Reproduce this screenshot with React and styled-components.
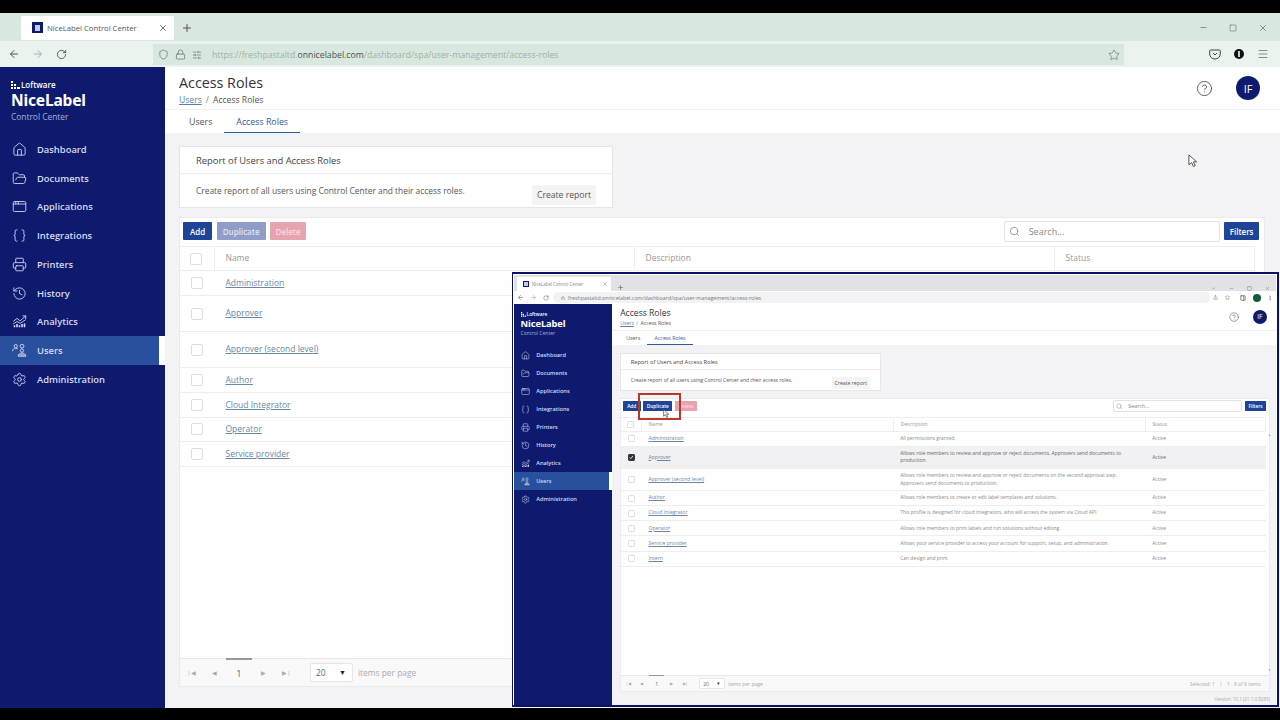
import styled, { createGlobalStyle } from "styled-components";
import {
  AppWindow, ArrowLeft, ArrowRight, Braces, ChevronDown, CircleHelp, FolderOpen,
  History, Home, Lock, Menu, Minus, MoreVertical, PanelRight, Plus, Printer, RotateCw, Search,
  Settings, Share, Shield, SlidersHorizontal, Square, Star, X,
} from "lucide-react";

const NAVY = "#0e1a6d";
const BLUE = "#1f4396";
const FONT = `"Open Sans", "Noto Sans", sans-serif`;

const GlobalStyle = createGlobalStyle`
  html, body { margin: 0; padding: 0; background: #000; }
  body { font-family: ${FONT}; }
  * { box-sizing: border-box; }
`;

const Frame = styled.div`
  position: relative;
  width: 1280px;
  height: 720px;
  padding: 13px 0 12px;
  overflow: hidden;
  background: #000;
`;

const Browser = styled.div`
  display: flex;
  flex-direction: column;
  height: 100%;
  background: #fff;
`;

/* firefox chrome of the recording */
const TabStrip = styled.div`
  display: flex;
  align-items: center;
  height: 28px;
  padding: 1px 0 0 21px;
  flex-shrink: 0;
  background: #d9e8df;
  color: #555;
`;

const Tab = styled.div`
  display: flex;
  align-items: center;
  width: 153px;
  height: 24px;
  padding: 0 6px 0 11px;
  background: #fff;
  border-radius: 2px;
  font-size: 7.7px;
  color: #555;
  span { flex-grow: 1; margin-left: 4px; white-space: nowrap; }
`;

const Favicon = styled.div`
  width: ${(p) => p.$size}px;
  height: ${(p) => p.$size}px;
  flex-shrink: 0;
  background: ${NAVY};
  border: ${(p) => p.$size / 3.6}px solid ${NAVY};
  border-bottom-width: ${(p) => p.$size / 5}px;
  &::after {
    content: "";
    display: block;
    height: 100%;
    background: #c5cbe6;
  }
`;

const NewTab = styled.div`
  display: flex;
  margin-left: ${(p) => p.$gap}px;
`;

const WindowButtons = styled.div`
  display: flex;
  align-items: center;
  gap: ${(p) => p.$gap}px;
  margin-left: auto;
  margin-right: ${(p) => p.$right}px;
  color: #777;
`;

const ToolBar = styled.div`
  display: flex;
  align-items: center;
  height: 26px;
  padding: 0 11px 0 8px;
  flex-shrink: 0;
  background: #ebf3ef;
  color: #555;
`;

const NavButtons = styled.div`
  display: flex;
  align-items: center;
  gap: 12px;
  width: 145px;
  flex-shrink: 0;
`;

const UrlBar = styled.div`
  display: flex;
  align-items: center;
  width: 971px;
  height: 21px;
  padding: 1px 4px 0 5px;
  background: #d9e8df;
  font-size: 8.7px;
  color: #9db0a9;
  white-space: nowrap;
  svg { flex-shrink: 0; margin-right: 6px; color: #566; }
  svg:last-child { margin-right: 0; }
  b { font-weight: 400; color: #48514e; }
  span { margin-left: 4px; flex-grow: 1; }
`;

const BarIcons = styled.div`
  display: flex;
  align-items: center;
  gap: 13px;
  margin-left: auto;
`;

const Pocket = styled.svg`
  width: 12px;
  height: 12px;
`;

const ProfileDot = styled.div`
  display: flex;
  align-items: center;
  justify-content: center;
  width: 10px;
  height: 10px;
  border-radius: 50%;
  background: #111;
  &::after { content: ""; width: 1.5px; height: 6px; background: #ccc; }
`;

/* the app itself, drawn twice: full size and inside the zoomed window */
const AppBody = styled.div`
  display: flex;
  flex-grow: 1;
  min-height: 0;
  min-width: 0;
`;

const Sidebar = styled.nav`
  display: flex;
  flex-direction: column;
  width: ${(p) => (p.$compact ? 163 : 165)}px;
  flex-shrink: 0;
  background: ${NAVY};
  color: #d5daf2;
`;

const Brand = styled.div`
  height: ${(p) => (p.$compact ? 70 : 68)}px;
  padding: 13px 0 0 11px;
  flex-shrink: 0;
`;

const Loftware = styled.div`
  display: flex;
  align-items: center;
  gap: 1px;
  height: 9px;
  font-size: 8px;
  font-weight: 600;
  line-height: 9px;
  color: #fff;
`;

const BrandMark = styled.svg`
  width: 9px;
  height: 8px;
`;

const NiceLabel = styled.div`
  height: 22px;
  font-family: "Noto Sans", sans-serif;
  font-size: 15.6px;
  font-weight: 700;
  line-height: 22px;
  letter-spacing: -0.2px;
  color: #fff;
`;

const ControlCenter = styled.div`
  font-size: 8.4px;
  color: #a4b2dd;
`;

const NavItem = styled.div`
  display: flex;
  align-items: center;
  gap: 10px;
  height: ${(p) => (p.$compact ? 30 : 28.75)}px;
  padding-left: 12px;
  flex-shrink: 0;
  font-size: 9.4px;
  font-weight: 600;
  background: ${(p) => (p.$active ? "#28509f" : "transparent")};
  border-right: ${(p) => (p.$active ? "6px solid #fff" : "none")};
  svg { width: 15px; height: 15px; flex-shrink: 0; }
`;

const Content = styled.main`
  display: flex;
  flex-direction: column;
  flex-grow: 1;
  min-width: 0;
  background: #f3f3f6;
`;

const PageHeader = styled.header`
  flex-shrink: 0;
  background: #fff;
`;

const TitleRow = styled.div`
  display: flex;
  align-items: center;
  justify-content: space-between;
  height: ${(p) => (p.$compact ? 45 : 43)}px;
  padding: 0 ${(p) => (p.$compact ? 15 : 20)}px 0 14px;
  border-bottom: 1px solid #f0f0f0;
`;

const TitleBlock = styled.div`
  padding-top: 4px;
`;

const PageTitle = styled.h1`
  margin: 0;
  font-size: 14.3px;
  font-weight: 400;
  line-height: 18px;
  color: #333;
`;

const Breadcrumb = styled.div`
  margin-top: 2px;
  font-size: 8.6px;
  line-height: 13px;
  color: #555;
  a { color: #5b7fa6; text-decoration: underline; }
  i { margin: 0 4px; font-style: normal; color: #888; }
`;

const HeaderActions = styled.div`
  display: flex;
  align-items: center;
  gap: 23px;
  color: #444;
`;

const Avatar = styled.div`
  display: flex;
  align-items: center;
  justify-content: center;
  width: 24px;
  height: 24px;
  border-radius: 50%;
  background: ${NAVY};
  font-size: 11px;
  color: #fff;
`;

const Tabs = styled.div`
  display: flex;
  height: ${(p) => (p.$compact ? 24 : 23)}px;
  padding-left: 12px;
`;

const TabLink = styled.div`
  padding: 5px 12px 0;
  font-size: 8.8px;
  line-height: 14px;
  color: ${(p) => (p.$active ? "#2c5c9a" : "#555")};
  border-bottom: ${(p) => (p.$active ? "1.5px solid #2c5c9a" : "none")};
`;

const Panels = styled.div`
  display: flex;
  flex-direction: column;
  flex-grow: 1;
  min-height: 0;
  padding: 13px ${(p) => (p.$compact ? "10px 15px" : "15px 21px")} 14px;
`;

const ReportCard = styled.section`
  width: 434px;
  flex-shrink: 0;
  background: #fff;
  border: 1px solid #e6e6e6;
`;

const ReportTitle = styled.div`
  height: 27px;
  padding-left: 16px;
  font-size: 9.4px;
  line-height: 27px;
  color: #444;
  border-bottom: 1px solid #ececec;
`;

const ReportBody = styled.div`
  display: flex;
  justify-content: space-between;
  height: 33px;
  padding: 10px 16px 0 16px;
  font-size: 8.4px;
  line-height: 14px;
  color: #555;
`;

const GhostButton = styled.button`
  width: 64px;
  height: 20px;
  margin-top: 1px;
  padding: 0;
  border: none;
  border-radius: 1px;
  background: #f4f4f4;
  font-family: inherit;
  font-size: 8.6px;
  color: #555;
`;

const TableCard = styled.section`
  display: flex;
  flex-direction: column;
  flex-grow: 1;
  min-height: 0;
  margin-top: ${(p) => (p.$compact ? 11 : 9)}px;
  background: #fff;
  border: 1px solid #ebebeb;
`;

const TableTools = styled.div`
  display: flex;
  align-items: center;
  gap: 4.5px;
  height: ${(p) => (p.$compact ? 30 : 28)}px;
  padding: 0 5px ${(p) => (p.$compact ? 6 : 2)}px 3px;
  flex-shrink: 0;
`;

const ActionButton = styled.button`
  height: 18px;
  padding: 0 ${(p) => p.$pad}px;
  border: none;
  border-radius: 1px;
  background: ${(p) => p.$bg};
  font-family: inherit;
  font-size: 8px;
  font-weight: 600;
  color: ${(p) => p.$fg || "#fff"};
`;

const SearchField = styled.div`
  display: flex;
  align-items: center;
  gap: 9px;
  width: 216px;
  height: 21px;
  margin-left: auto;
  padding-left: 4px;
  background: #fff;
  border: 1px solid #e2e2e2;
  border-radius: 2px;
  font-size: 9px;
  color: #888;
`;

const GridRow = styled.div`
  display: grid;
  grid-template-columns: 35px 420px 420px 200px;
  align-items: center;
  height: ${(p) => p.$h}px;
  flex-shrink: 0;
  background: ${(p) => (p.$selected ? "#f1f1f3" : "transparent")};
  border-bottom: 1px solid #eeeeee;
  font-size: 8.5px;
  line-height: 12.5px;
  color: #777;
`;

const HeadRow = styled(GridRow)`
  width: 1075px;
  align-items: stretch;
  border-top: 1px solid #eeeeee;
  color: #999;
`;

const HeadCell = styled.div`
  display: flex;
  align-items: center;
  padding-left: 10.5px;
  border-right: 1px solid #eeeeee;
`;

const CheckCell = styled.div`
  display: flex;
  align-items: center;
  justify-content: center;
  padding-right: 2px;
`;

const HeadCheck = styled(CheckCell)`
  border-right: 1px solid #eeeeee;
`;

const Checkbox = styled.div`
  display: flex;
  align-items: center;
  justify-content: center;
  width: 12px;
  height: 12px;
  background: ${(p) => (p.$checked ? "#333" : "#fff")};
  border: 1px solid ${(p) => (p.$checked ? "#333" : "#dedede")};
  border-radius: 2px;
  color: #fff;
`;

const NameLink = styled.a`
  padding-left: 10.5px;
  color: #6b87a8;
  text-decoration: underline;
`;

const Cell = styled.div`
  padding: 0 ${(p) => p.$right || 0}px 0 10px;
  font-size: 8.25px;
  color: ${(p) => (p.$selected ? "#666" : "#8a8a8a")};
`;

const TableScroll = styled.div`
  display: flex;
  flex-grow: 1;
  min-height: 0;
`;

const RowList = styled.div`
  display: flex;
  flex-direction: column;
  width: 1075px;
  flex-shrink: 0;
`;

const ScrollGutter = styled.div`
  display: flex;
  flex-direction: column;
  justify-content: space-between;
  flex-grow: 1;
  padding: 4px 0 4px 3px;
  font-size: 5px;
  line-height: 6px;
  color: #999;
`;

const Pager = styled.div`
  display: flex;
  align-items: center;
  height: 28px;
  padding: 0 14px 0 0;
  flex-shrink: 0;
  background: #f9f9fa;
  border-top: 1px solid #e8e8e8;
  font-size: 8.4px;
  color: #aaa;
`;

const PageArrow = styled.div`
  display: flex;
  align-items: center;
  justify-content: center;
  width: 23px;
  font-size: 6px;
  color: #aaa;
`;

const PageNumber = styled.div`
  position: relative;
  width: 26px;
  padding-top: 2px;
  text-align: center;
  color: #555;
  &::before {
    content: "";
    position: absolute;
    top: -8px;
    left: 0;
    right: 0;
    height: 2px;
    background: #999;
  }
`;

const PageSize = styled.div`
  display: flex;
  align-items: center;
  justify-content: space-between;
  width: 43px;
  height: 19px;
  margin: 0 5px 0 12px;
  padding: 0 6px 0 5px;
  background: #fff;
  border: 1px solid #e6e6e6;
  border-radius: 2px;
  color: #666;
  i { font-style: normal; font-size: 7px; color: #222; }
`;

const PagerInfo = styled.div`
  margin-left: auto;
  font-size: 8.2px;
  color: #aaa;
  i { margin: 0 8px; font-style: normal; }
`;

const VersionLine = styled.div`
  height: 0;
  margin-top: 6px;
  text-align: right;
  font-size: 7.6px;
  line-height: 10px;
  color: #aaa;
`;

/* the picture-in-picture window */
const Inset = styled.div`
  position: absolute;
  left: 512px;
  top: 272px;
  display: flex;
  flex-direction: column;
  width: 767px;
  height: 435px;
  padding: 1px 1px 0 1px;
  background: #fff;
  border: 2px solid #0b1164;
  border-left-width: 1px;
`;

const InsetTabs = styled.div`
  display: flex;
  align-items: flex-end;
  height: 16px;
  padding-left: 3px;
  flex-shrink: 0;
  background: #e1e1e6;
  color: #666;
`;

const InsetTab = styled.div`
  display: flex;
  align-items: center;
  width: 94px;
  height: 14px;
  padding: 0 3px 0 6px;
  background: #fff;
  font-size: 4.4px;
  color: #888;
  span { flex-grow: 1; margin-left: 3px; white-space: nowrap; }
`;

const InsetBar = styled.div`
  display: flex;
  align-items: center;
  height: 13px;
  padding: 0 3px;
  flex-shrink: 0;
  background: #fff;
  color: #666;
`;

const InsetNav = styled.div`
  display: flex;
  align-items: center;
  gap: 6px;
  width: 36px;
  flex-shrink: 0;
`;

const InsetUrl = styled.div`
  display: flex;
  align-items: center;
  gap: 3px;
  width: 657px;
  height: 11px;
  padding-left: 8px;
  background: #f1f3f4;
  border-radius: 5px;
  font-size: 5.3px;
  color: #777;
  white-space: nowrap;
`;

const InsetIcons = styled.div`
  display: flex;
  align-items: center;
  gap: 6.5px;
  margin-left: 3px;
  svg:nth-child(3) { margin-left: 4px; color: #222; }
`;

const InsetProfile = styled.div`
  width: 8px;
  height: 8px;
  border-radius: 50%;
  background: #0f5c3a;
`;

const Zoomed = styled.div`
  display: flex;
  flex-grow: 1;
  min-height: 0;
  zoom: 0.6;
`;

const Highlight = styled.div`
  position: absolute;
  left: 125px;
  top: 119px;
  width: 43px;
  height: 27px;
  border: 2px solid #b9372c;
`;

const Pointer = styled.svg`
  position: absolute;
  left: ${(p) => p.$x}px;
  top: ${(p) => p.$y}px;
  width: ${(p) => p.$size}px;
  height: ${(p) => p.$size * 1.5}px;
`;

const roles = [
  { name: "Administration", h: 25, insetH: 25, description: "All permissions granted." },
  { name: "Approver", h: 36, insetH: 37, selected: true, description: "Allows role members to review and approve or reject documents. Approvers send documents to production." },
  { name: "Approver (second level)", h: 36, insetH: 37, description: "Allows role members to review and approve or reject documents on the second approval step. Approvers send documents to production." },
  { name: "Author", h: 25, insetH: 25, description: "Allows role members to create or edit label templates and solutions." },
  { name: "Cloud Integrator", h: 24.5, insetH: 25, description: "This profile is designed for cloud integrators, who will access the system via Cloud API." },
  { name: "Operator", h: 24.5, insetH: 25.5, description: "Allows role members to print labels and run solutions without editing." },
  { name: "Service provider", h: 24.5, insetH: 25.5, description: "Allows your service provider to access your account for support, setup, and administration." },
  { name: "Intern", h: 24.5, insetH: 25, description: "Can design and print" },
];

function AnalyticsIcon() {
  return (
    <svg viewBox="0 0 24 24" fill="none" stroke="currentColor" strokeWidth="1.4">
      <path d="M2 12l6-5 5 4 9-8" />
      <path d="M17 3h5v5" />
      <path d="M2 16l6-4 5 3 9-6" />
      <path d="M4 21v-3M8 21v-5M12 21v-3M16 21v-5M20 21v-6" strokeWidth="2.6" />
    </svg>
  );
}

function UsersIcon() {
  return (
    <svg viewBox="0 0 24 24" fill="none" stroke="currentColor" strokeWidth="1.4">
      <circle cx="6" cy="5" r="2.6" />
      <path d="M1 13c0-3 2-4.500 5-4.500 1.500 0 2.600.3 3.400 1" />
      <circle cx="16" cy="5" r="3" />
      <circle cx="16" cy="12" r="2.600" />
      <path d="M10 21c0-3.400 2.400-5 6-5s6 1.600 6 5z" fill="currentColor" />
      <path d="M11 17.500h10M11 19.500h10" stroke="#0e1a6d" strokeWidth=".7" />
    </svg>
  );
}

const navItems = [
  { label: "Dashboard", icon: <Home strokeWidth={1.4} /> },
  { label: "Documents", icon: <FolderOpen strokeWidth={1.4} /> },
  { label: "Applications", icon: <AppWindow strokeWidth={1.4} /> },
  { label: "Integrations", icon: <Braces strokeWidth={1.4} /> },
  { label: "Printers", icon: <Printer strokeWidth={1.4} /> },
  { label: "History", icon: <History strokeWidth={1.4} /> },
  { label: "Analytics", icon: <AnalyticsIcon /> },
  { label: "Users", icon: <UsersIcon />, active: true },
  { label: "Administration", icon: <Settings strokeWidth={1.4} /> },
];

function ControlCenterApp({ compact }) {
  const visibleRoles = compact ? roles : roles.slice(0, 7);

  return (
    <AppBody>
      <Sidebar $compact={compact}>
        <Brand $compact={compact}>
          <Loftware>
            <BrandMark viewBox="0 0 9 8" fill="#fff">
              <path d="M0 0h2v2H0zM0 3h2v2H0zM0 6h2v2H0zM3 6h2v2H3zM6 6h3v2H6zM3 3h2v2H3z" />
            </BrandMark>
            Loftware
          </Loftware>
          <NiceLabel>NiceLabel</NiceLabel>
          <ControlCenter>Control Center</ControlCenter>
        </Brand>
        {navItems.map((item) => (
          <NavItem key={item.label} $active={item.active} $compact={compact}>
            {item.icon}
            {item.label}
          </NavItem>
        ))}
      </Sidebar>

      <Content>
        <PageHeader>
          <TitleRow $compact={compact}>
            <TitleBlock>
              <PageTitle>Access Roles</PageTitle>
              <Breadcrumb><a>Users</a><i>/</i>Access Roles</Breadcrumb>
            </TitleBlock>
            <HeaderActions>
              <CircleHelp size={17} strokeWidth={1.2} />
              <Avatar>IF</Avatar>
            </HeaderActions>
          </TitleRow>
          <Tabs $compact={compact}>
            <TabLink>Users</TabLink>
            <TabLink $active>Access Roles</TabLink>
          </Tabs>
        </PageHeader>

        <Panels $compact={compact}>
          <ReportCard>
            <ReportTitle>Report of Users and Access Roles</ReportTitle>
            <ReportBody>
              Create report of all users using Control Center and their access roles.
              <GhostButton>Create report</GhostButton>
            </ReportBody>
          </ReportCard>

          <TableCard $compact={compact}>
            <TableTools $compact={compact}>
              <ActionButton $pad={7} $bg={BLUE}>Add</ActionButton>
              <ActionButton $pad={6} $bg={compact ? BLUE : "#8f9dc8"} $fg={compact ? "#fff" : "#dfe4f3"}>Duplicate</ActionButton>
              <ActionButton $pad={5.5} $bg="#e7a3ae" $fg="#f6dce0">Delete</ActionButton>
              <SearchField>
                <Search size={11} strokeWidth={1.5} color="#777" />
                Search...
              </SearchField>
              <ActionButton $pad={5.5} $bg={BLUE}>Filters</ActionButton>
            </TableTools>

            <HeadRow $h={25}>
              <HeadCheck>
                <Checkbox>{compact && <Minus size={7} color="#bbb" />}</Checkbox>
              </HeadCheck>
              <HeadCell>Name</HeadCell>
              <HeadCell>Description</HeadCell>
              <HeadCell>Status</HeadCell>
            </HeadRow>

            <TableScroll>
              <RowList>
                {visibleRoles.map((role) => (
                  <GridRow key={role.name} $h={compact ? role.insetH : role.h} $selected={compact && role.selected}>
                    <CheckCell>
                      <Checkbox $checked={compact && role.selected}>
                        {compact && role.selected && (
                          <svg width="8" height="8" viewBox="0 0 8 8" fill="none" stroke="#fff" strokeWidth="1.4">
                            <path d="M1 4l2 2 4-5" />
                          </svg>
                        )}
                      </Checkbox>
                    </CheckCell>
                    <NameLink>{role.name}</NameLink>
                    {compact && <Cell $selected={role.selected} $right={37}>{role.description}</Cell>}
                    {compact && <Cell $selected={role.selected}>Active</Cell>}
                  </GridRow>
                ))}
              </RowList>
              {compact && (
                <ScrollGutter>
                  <span>▲</span>
                  <span>▼</span>
                </ScrollGutter>
              )}
            </TableScroll>

            <Pager>
              <PageArrow>|◀</PageArrow>
              <PageArrow>◀</PageArrow>
              <PageNumber>1</PageNumber>
              <PageArrow>▶</PageArrow>
              <PageArrow>▶|</PageArrow>
              <PageSize>20<i>▼</i></PageSize>
              items per page
              {compact && <PagerInfo>Selected: 1<i>|</i>1 - 8 of 8 items</PagerInfo>}
            </Pager>
          </TableCard>
          {compact && <VersionLine>Version: 10.1 (21.1.0.8283)</VersionLine>}
        </Panels>
      </Content>
    </AppBody>
  );
}

export default function App() {
  return (
    <Frame>
      <GlobalStyle />
      <Browser>
        <TabStrip>
          <Tab>
            <Favicon $size={11} />
            <span>NiceLabel Control Center</span>
            <X size={10} />
          </Tab>
          <NewTab $gap={7}><Plus size={12} /></NewTab>
          <WindowButtons $gap={21} $right={12}>
            <Minus size={9} />
            <Square size={8} />
            <X size={10} />
          </WindowButtons>
        </TabStrip>

        <ToolBar>
          <NavButtons>
            <ArrowLeft size={12} />
            <ArrowRight size={12} color="#aab" />
            <RotateCw size={11} />
          </NavButtons>
          <UrlBar>
            <Shield size={11} strokeWidth={1.4} />
            <Lock size={11} strokeWidth={1.4} />
            <SlidersHorizontal size={10} strokeWidth={1.4} />
            <span>https://freshpastaltd.<b>onnicelabel.com</b>/dashboard/spa/user-management/access-roles</span>
            <Star size={12} strokeWidth={1.2} />
          </UrlBar>
          <BarIcons>
            <Pocket viewBox="0 0 12 12" fill="none" stroke="#444" strokeWidth="1">
              <path d="M1.500 2h9a.8.8 0 0 1 .8.8V6a5.300 5 0 0 1-10.600 0V2.800a.8.8 0 0 1 .8-.8z" />
              <path d="M4 5l2 2 2-2" />
            </Pocket>
            <ProfileDot />
            <Menu size={12} strokeWidth={1.3} />
          </BarIcons>
        </ToolBar>

        <ControlCenterApp />
      </Browser>

      <Pointer $x={1188} $y={154} $size={9} viewBox="0 0 10 15" fill="#fff" stroke="#444" strokeWidth="1">
        <path d="M1 1v11l3-2.500 2 4.500 2-1-2-4.300h3.600z" />
      </Pointer>

      <Inset>
        <InsetTabs>
          <InsetTab>
            <Favicon $size={6} />
            <span>NiceLabel Control Center</span>
            <X size={6} />
          </InsetTab>
          <NewTab $gap={6}><Plus size={7} /></NewTab>
          <WindowButtons $gap={13} $right={6}>
            <ChevronDown size={5} />
            <Minus size={5} />
            <Square size={5} />
            <X size={5} />
          </WindowButtons>
        </InsetTabs>
        <InsetBar>
          <InsetNav>
            <ArrowLeft size={7} />
            <ArrowRight size={7} color="#aaa" />
            <RotateCw size={6} />
          </InsetNav>
          <InsetUrl>
            <Lock size={4} />
            freshpastaltd.onnicelabel.com/dashboard/spa/user-management/access-roles
          </InsetUrl>
          <InsetIcons>
            <Share size={5} />
            <Star size={5} />
            <PanelRight size={6} />
            <InsetProfile />
            <MoreVertical size={6} />
          </InsetIcons>
        </InsetBar>
        <Zoomed>
          <ControlCenterApp compact />
        </Zoomed>
        <Highlight />
        <Pointer $x={150} $y={135} $size={6} viewBox="0 0 10 15" fill="#fff" stroke="#333" strokeWidth="1">
          <path d="M1 1v11l3-2.500 2 4.500 2-1-2-4.300h3.600z" />
        </Pointer>
      </Inset>
    </Frame>
  );
}
